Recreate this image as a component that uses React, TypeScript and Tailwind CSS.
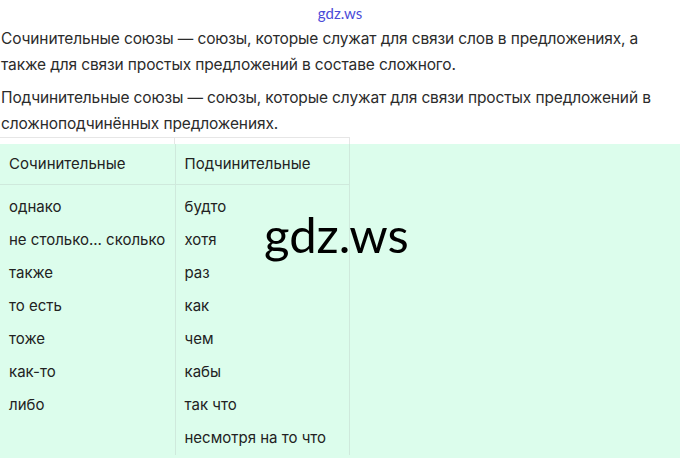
const left = ['однако', 'не столько... сколько', 'также', 'то есть', 'тоже', 'как-то', 'либо', ''];
const right = ['будто', 'хотя', 'раз', 'как', 'чем', 'кабы', 'так что', 'несмотря на то что'];

export default function App() {
  return (
    <div className="relative h-[458px] w-[680px] overflow-hidden bg-white font-['Inter',sans-serif] text-[#2b2b2b]">
      <div className="flex h-[26px] items-center justify-center pt-[1px] font-['Lato',sans-serif] text-[15px] text-[#4b4bd8]">
        gdz.ws
      </div>
      <div className="pl-[1px] text-[15.5px] leading-[26px] tracking-[-0.13px]">
        <p className="mb-[7px]">
          Сочинительные союзы — союзы, которые служат для связи слов в предложениях, а также для связи простых
          предложений в составе сложного.
        </p>
        <p>Подчинительные союзы — союзы, которые служат для связи простых предложений в сложноподчинённых предложениях.</p>
      </div>
      <div className="h-[7px] w-[350px] border-t border-r border-[#e6e6e6]">
        <div className="ml-[174px] h-full w-px bg-[#e6e6e6]" />
      </div>
      <div className="h-[400px] bg-[#dcfdec]">
        <table className="w-[350px] border-collapse text-[15px] text-[#222]">
          <thead>
            <tr className="h-[40px] border-b border-[#cfe9dc]">
              <th className="w-[175px] border-r border-[#cfe9dc] pl-[9px] text-left font-normal">Сочинительные</th>
              <th className="border-r border-[#cfe9dc] pl-[9px] text-left font-normal">Подчинительные</th>
            </tr>
          </thead>
          <tbody>
            <tr className="h-[7px]">
              <td className="border-r border-[#cfe9dc]" />
              <td className="border-r border-[#cfe9dc]" />
            </tr>
            {right.map((r, i) => (
              <tr key={r} className="h-[33px]">
                <td className="border-r border-[#cfe9dc] pl-[9px]">{left[i]}</td>
                <td className="border-r border-[#cfe9dc] pl-[9px]">{r}</td>
              </tr>
            ))}
          </tbody>
        </table>
      </div>
      <div className="absolute left-[264px] top-[210px] font-['Lato',sans-serif] text-[49px] leading-none text-black">gdz.ws</div>
    </div>
  );
}
